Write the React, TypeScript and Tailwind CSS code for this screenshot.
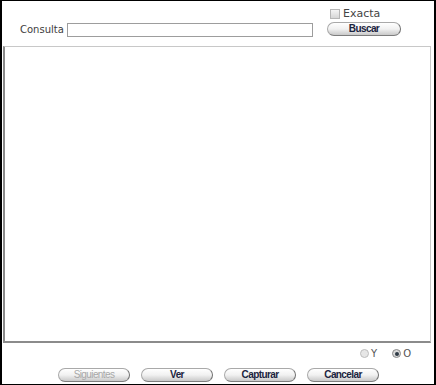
const PillButton = ({ label, disabled, wide }: { label: string; disabled?: boolean; wide?: boolean }) => {
  return (
    <button
      type="button"
      className={
        (wide ? "w-[74px] " : "w-[72px] ") +
        "h-[14px] rounded-full border border-[#a9a9a9] border-r-[#6f6f6f] border-b-[#7d7d7d] bg-gradient-to-b from-white via-[#f1f1f1] to-[#c9c9c9] text-[10px] leading-[12px] font-bold tracking-[-0.6px] " +
        (disabled ? "text-[#a8a8a8] font-normal tracking-[-0.3px]" : "text-[#1b2440]")
      }
      style={{ fontFamily: '"Liberation Sans", Arial, sans-serif' }}
    >
      {label}
    </button>
  )
}

const App = () => {
  return (
    <div
      className="w-[436px] h-[385px] bg-white border-t border-b border-l-2 border-r-2 border-black flex flex-col text-[#444]"
      style={{ fontFamily: '"DejaVu Sans", Verdana, sans-serif' }}
    >
      <div className="flex items-start pt-[6px] pl-[18px] pr-[33px]">
        <div className="flex items-center gap-[3px] mt-[15px]">
          <label htmlFor="q" className="text-[10px] text-[#3d3d3d]">Consulta</label>
          <input id="q" type="text" className="w-[246px] h-[14px] border border-[#9d9d9d] bg-white outline-none" />
        </div>
        <div className="ml-auto flex flex-col items-start gap-[2px]">
          <div className="flex items-center gap-[3px] pl-[3px]">
            <span className="w-[10px] h-[10px] border border-[#b6b6b6] bg-gradient-to-b from-[#f4f4f4] to-[#d6d6d6]" />
            <span className="text-[11px] leading-[13px] text-[#444]">Exacta</span>
          </div>
          <PillButton label="Buscar" wide />
        </div>
      </div>
      <div className="ml-[1px] mr-[3px] mt-[9px] h-[297px] border border-[#c8c8c8] border-l-[#8b8b8b] border-b-[#8b8b8b] border-l-2 border-b-2 bg-white" />
      <div className="flex justify-end items-center gap-[15px] pr-[23px] mt-[3px] text-[10px] text-[#555]">
        <div className="flex items-center gap-[2px]">
          <span className="w-[9px] h-[9px] rounded-full border border-[#bdbdbd] bg-[#e6e6e6]" />
          <span>Y</span>
        </div>
        <div className="flex items-center gap-[2px]">
          <span className="w-[9px] h-[9px] rounded-full border border-[#8a8a8a] bg-[#d9d9d9] flex items-center justify-center">
            <span className="w-[4px] h-[4px] rounded-full bg-[#2f3a45]" />
          </span>
          <span>O</span>
        </div>
      </div>
      <div className="flex justify-center gap-[11px] mt-[7px] pl-[1px]">
        <PillButton label="Siguientes" disabled />
        <PillButton label="Ver" />
        <PillButton label="Capturar" />
        <PillButton label="Cancelar" />
      </div>
    </div>
  )
}

export default App
